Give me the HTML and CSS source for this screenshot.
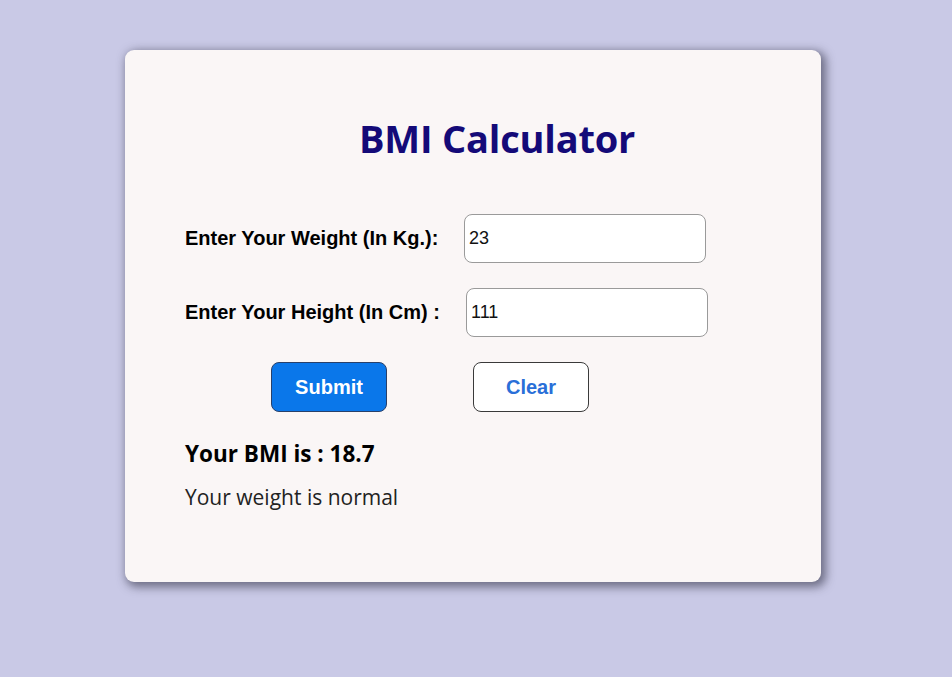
FILE: index.html
```html
<!DOCTYPE html>
<html>
<head>
<meta charset="utf-8">
<link rel="stylesheet" href="styles.css">
</head>
<body>
<div class="card">
  <h1 class="title">BMI Calculator</h1>
  <div class="row row-weight">
    <label class="label">Enter Your Weight (In Kg.):</label>
    <input class="field field-weight" type="text" value="23">
  </div>
  <div class="row row-height">
    <label class="label">Enter Your Height (In Cm) :</label>
    <input class="field field-height" type="text" value="111">
  </div>
  <div class="buttons">
    <button class="btn btn-submit">Submit</button>
    <button class="btn btn-clear">Clear</button>
  </div>
  <div class="result">Your BMI is : 18.7</div>
  <div class="message">Your weight is normal</div>
</div>
</body>
</html>
```
FILE: styles.css
```css
html, body {
  margin: 0;
  padding: 0;
}
body {
  background: #c9c9e6;
  width: 952px;
  height: 677px;
  padding-top: 50px;
  box-sizing: border-box;
  font-family: "Liberation Sans", Arial, sans-serif;
}
.card {
  margin-left: 125px;
  width: 696px;
  height: 532px;
  box-sizing: border-box;
  background: #faf6f6;
  border-radius: 9px;
  box-shadow: 3px 3px 10px 2px rgba(60, 60, 80, 0.65);
  padding: 58px 0 0 60px;
}
.title {
  margin: 0 0 0 174px;
  font-family: "Open Sans", "Noto Sans", sans-serif;
  font-weight: 700;
  font-size: 38px;
  line-height: 60px;
  color: #140a78;
  letter-spacing: -0.2px;
}
.row {
  display: flex;
  align-items: center;
  height: 50px;
}
.row-weight {
  margin-top: 45px;
}
.row-height {
  margin-top: 24px;
}
.label {
  font-weight: 700;
  font-size: 20px;
  color: #000;
  width: 279px;
}
.row-height .label {
  width: 281px;
}
.field {
  width: 242px;
  height: 49px;
  box-sizing: border-box;
  border: 1px solid #9a9a9a;
  border-radius: 8px;
  background: #fff;
  font-family: "Liberation Sans", Arial, sans-serif;
  font-size: 18px;
  color: #111;
  padding: 0 4px;
  outline: none;
}
.buttons {
  display: flex;
  margin-top: 25px;
  margin-left: 86px;
  gap: 86px;
}
.btn {
  width: 116px;
  height: 50px;
  border-radius: 8px;
  font-family: "Liberation Sans", Arial, sans-serif;
  font-weight: 700;
  font-size: 20px;
  cursor: pointer;
}
.btn-submit {
  background: #0a77ea;
  color: #fff;
  border: 1px solid #28406a;
}
.btn-clear {
  background: #fff;
  color: #2a6fd8;
  border: 1px solid #3a3a3a;
}
.result {
  margin-top: 27px;
  font-family: "Open Sans", "Noto Sans", sans-serif;
  font-weight: 700;
  font-size: 22.5px;
  line-height: 30px;
  color: #000;
}
.message {
  margin-top: 13px;
  font-family: "Open Sans", "Noto Sans", sans-serif;
  font-size: 21px;
  line-height: 30px;
  color: #222;
}
```
